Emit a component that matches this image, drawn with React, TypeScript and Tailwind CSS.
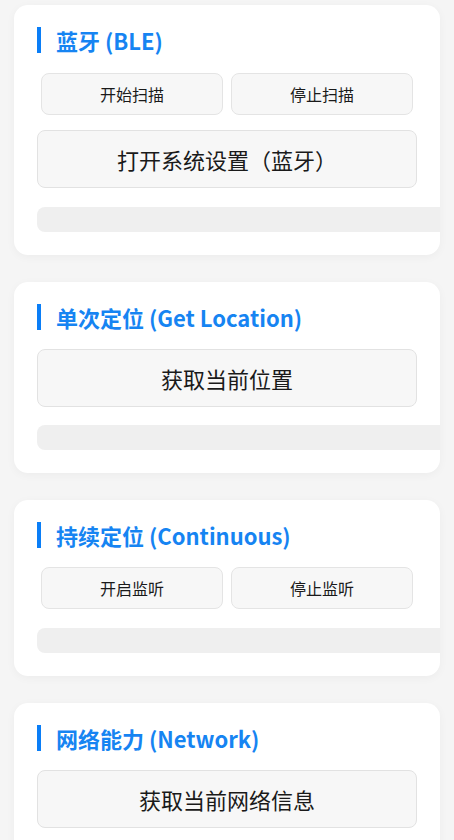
const font = { fontFamily: '"Noto Sans CJK SC", "Noto Sans", sans-serif' };

function Title({ children }: { children: React.ReactNode }) {
  return (
    <div className="flex items-center h-[26px] border-l-4 border-[#0a7ef7] pl-[15px]">
      <span className="text-[22px] leading-none font-semibold text-[#1684f2]">{children}</span>
    </div>
  );
}

function SmallButtons({ labels }: { labels: string[] }) {
  return (
    <div className="flex gap-2 px-1">
      {labels.map((l) => (
        <button
          key={l}
          className="w-[182px] h-[42px] rounded-lg border border-[#e4e4e4] bg-[#f7f7f7] text-[16px] text-[#1a1a1a]"
        >
          {l}
        </button>
      ))}
    </div>
  );
}

function BigButton({ label }: { label: string }) {
  return (
    <button className="w-full h-[58px] rounded-lg border border-[#e2e2e2] bg-[#f7f7f7] text-[22px] text-[#1a1a1a]">
      {label}
    </button>
  );
}

function LogBar() {
  return <div className="h-[25px] mr-[-40px] rounded-lg bg-[#efefef]" />;
}

function Card({ children }: { children: React.ReactNode }) {
  return (
    <div className="shrink-0 bg-white rounded-[14px] overflow-hidden shadow-[0_2px_10px_rgba(0,0,0,0.04)] pl-[23px] pr-[23px] pt-[22px] pb-[23px]">
      {children}
    </div>
  );
}

export default function App() {
  return (
    <div style={font} className="h-[840px] bg-[#f5f5f5] px-[14px] pt-[5px] flex flex-col gap-[27px] overflow-hidden">
      <Card>
        <Title>蓝牙 (BLE)</Title>
        <div className="mt-[20px]">
          <SmallButtons labels={["开始扫描", "停止扫描"]} />
        </div>
        <div className="mt-[15px]">
          <BigButton label="打开系统设置（蓝牙）" />
        </div>
        <div className="mt-[19px]">
          <LogBar />
        </div>
      </Card>

      <Card>
        <Title>单次定位 (Get Location)</Title>
        <div className="mt-[19px]">
          <BigButton label="获取当前位置" />
        </div>
        <div className="mt-[18px]">
          <LogBar />
        </div>
      </Card>

      <Card>
        <Title>持续定位 (Continuous)</Title>
        <div className="mt-[19px]">
          <SmallButtons labels={["开启监听", "停止监听"]} />
        </div>
        <div className="mt-[19px]">
          <LogBar />
        </div>
      </Card>

      <Card>
        <Title>网络能力 (Network)</Title>
        <div className="mt-[19px]">
          <BigButton label="获取当前网络信息" />
        </div>
        <div className="mt-[19px]">
          <LogBar />
        </div>
      </Card>
    </div>
  );
}
